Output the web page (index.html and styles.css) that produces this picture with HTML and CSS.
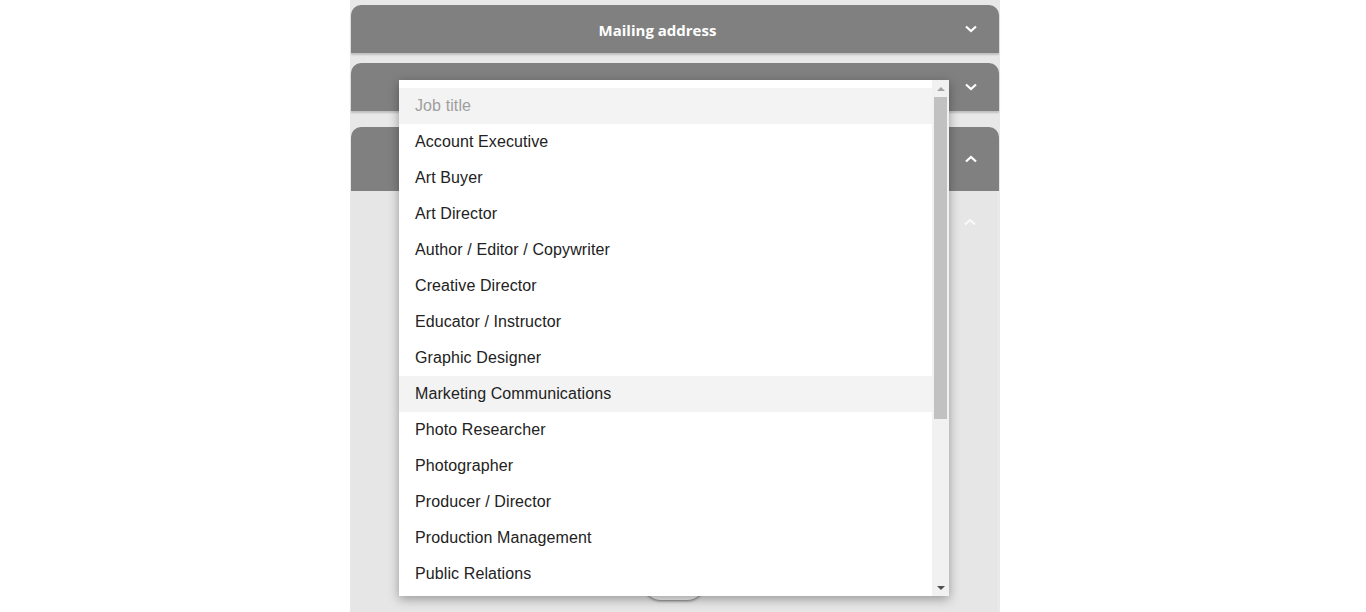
FILE: index.html
```html
<!DOCTYPE html>
<html>
<head>
<meta charset="utf-8">
<link rel="stylesheet" href="styles.css">
</head>
<body>
<div class="column">
  <section class="panel">
    <header class="panel-head">
      <span class="panel-title">Mailing address</span>
      <svg class="chev" viewBox="0 0 14 10" width="14" height="10"><path d="M2 2.5 L7 7 L12 2.5" fill="none" stroke="#fff" stroke-width="2.2"/></svg>
    </header>
  </section>
  <section class="panel panel-second">
    <header class="panel-head">
      <span class="panel-title"></span>
      <svg class="chev" viewBox="0 0 14 10" width="14" height="10"><path d="M2 2.5 L7 7 L12 2.5" fill="none" stroke="#fff" stroke-width="2.2"/></svg>
    </header>
  </section>
  <section class="panel panel-open">
    <header class="panel-head panel-head-tall">
      <span class="panel-title"></span>
      <svg class="chev" viewBox="0 0 14 10" width="14" height="10"><path d="M2 7.5 L7 3 L12 7.5" fill="none" stroke="#fff" stroke-width="2.2"/></svg>
    </header>
    <div class="panel-body">
      <div class="sub-head">
        <svg class="chev" viewBox="0 0 14 10" width="14" height="10"><path d="M2 7.5 L7 3 L12 7.5" fill="none" stroke="#fafafa" stroke-width="2"/></svg>
      </div>
      <div class="pill"></div>
    </div>
  </section>
</div>

<div class="dropdown">
  <ul class="options">
    <li class="opt placeholder">Job title</li>
    <li class="opt">Account Executive</li>
    <li class="opt">Art Buyer</li>
    <li class="opt">Art Director</li>
    <li class="opt">Author / Editor / Copywriter</li>
    <li class="opt">Creative Director</li>
    <li class="opt">Educator / Instructor</li>
    <li class="opt">Graphic Designer</li>
    <li class="opt hover">Marketing Communications</li>
    <li class="opt">Photo Researcher</li>
    <li class="opt">Photographer</li>
    <li class="opt">Producer / Director</li>
    <li class="opt">Production Management</li>
    <li class="opt">Public Relations</li>
  </ul>
  <div class="scrollbar">
    <div class="arrow arrow-up"></div>
    <div class="track"><div class="thumb"></div></div>
    <div class="arrow arrow-down"></div>
  </div>
</div>
</body>
</html>
```

FILE: styles.css
```css
html, body {
  margin: 0;
  padding: 0;
  background: #ffffff;
  height: 612px;
  overflow: hidden;
}
body {
  font-family: "Liberation Sans", Arial, sans-serif;
}
.column {
  margin-left: 350px;
  width: 650px;
  height: 612px;
  background: #e8e8e8;
  box-sizing: border-box;
  padding: 5px 1px 0 1px;
  display: flex;
  flex-direction: column;
}
.panel {
  display: flex;
  flex-direction: column;
}
.panel-second {
  margin-top: 10px;
}
.panel-open {
  margin-top: 16px;
  flex: 1;
}
.panel-head {
  height: 48px;
  background: #808080;
  border-radius: 10px 10px 0 0;
  display: flex;
  align-items: center;
  padding-right: 21px;
  box-shadow: 0 2px 2px rgba(0,0,0,0.18);
  position: relative;
  z-index: 1;
}
.panel-head-tall {
  height: 64px;
  box-shadow: none;
}
.panel-title {
  flex: 1;
  text-align: center;
  color: #ffffff;
  font-family: "Open Sans", sans-serif;
  font-weight: 700;
  font-size: 15px;
  padding-top: 2px;
}
.chev {
  display: block;
  flex: none;
}
.panel-body {
  flex: 1;
  background: #e6e6e6;
  display: flex;
  flex-direction: column;
  border-right: 1px solid #ececec;
}
.sub-head {
  height: 62px;
  display: flex;
  justify-content: flex-end;
  align-items: center;
  padding-right: 21px;
}
.pill {
  margin-top: auto;
  margin-left: 292px;
  width: 62px;
  height: 36px;
  margin-bottom: 12px;
  border-radius: 18px;
  background: #f2f2f2;
  box-shadow: 0 1px 3px rgba(0,0,0,0.5);
}
.dropdown {
  position: absolute;
  left: 399px;
  top: 80px;
  width: 550px;
  height: 516px;
  background: #ffffff;
  box-shadow: 0 3px 10px rgba(0,0,0,0.35);
  display: flex;
  z-index: 5;
}
.options {
  list-style: none;
  margin: 0;
  padding: 8px 0 4px 0;
  flex: 1;
}
.opt {
  height: 36px;
  line-height: 36px;
  padding-left: 16px;
  font-size: 16px;
  letter-spacing: 0.1px;
  color: #222222;
}
.opt.placeholder {
  color: #9e9e9e;
  background: #f3f3f3;
}
.opt.hover {
  background: #f3f3f3;
}
.scrollbar {
  width: 17px;
  background: #f1f1f1;
  display: flex;
  flex-direction: column;
}
.arrow {
  height: 17px;
  display: flex;
  align-items: center;
  justify-content: center;
  flex: none;
}
.arrow-up::before {
  content: "";
  border-left: 4px solid transparent;
  border-right: 4px solid transparent;
  border-bottom: 4px solid #a3a3a3;
}
.arrow-down::before {
  content: "";
  border-left: 4px solid transparent;
  border-right: 4px solid transparent;
  border-top: 4px solid #505050;
}
.track {
  flex: 1;
  padding: 0 2px;
}
.thumb {
  height: 322px;
  background: #c1c1c1;
}
```
